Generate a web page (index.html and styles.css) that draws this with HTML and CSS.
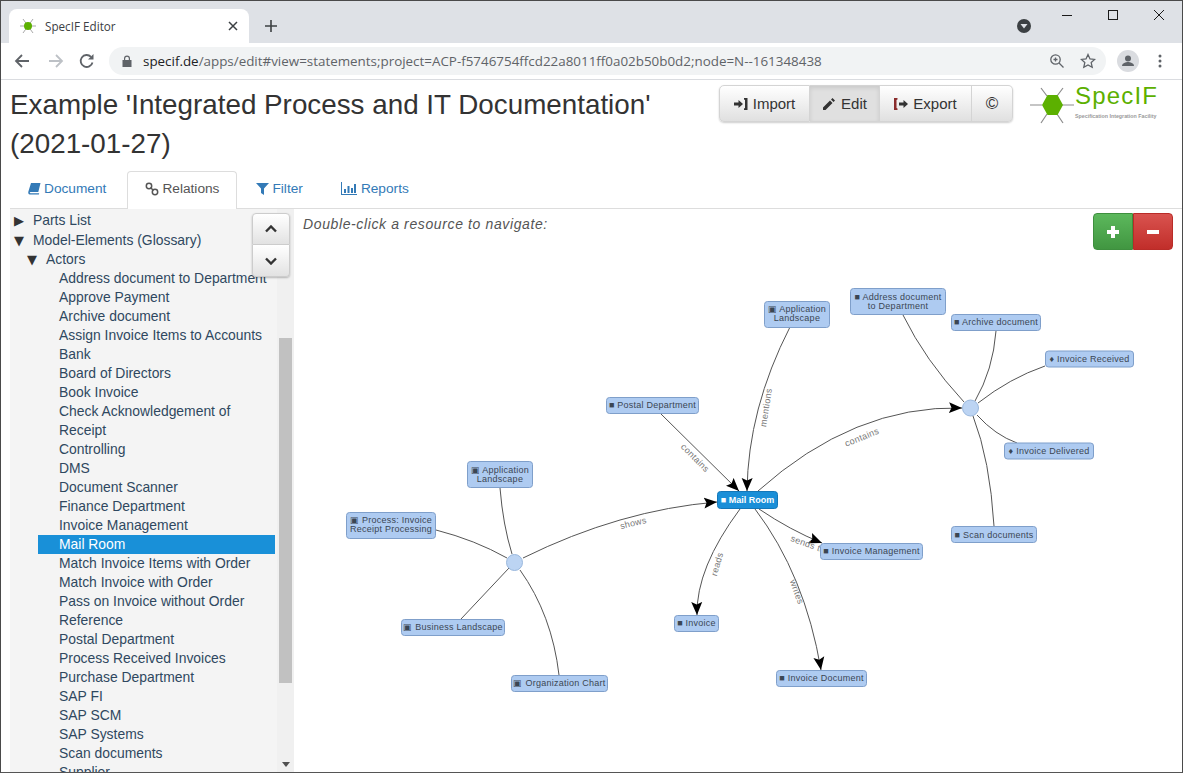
FILE: index.html
```html
<!DOCTYPE html>
<html lang="en">
<head>
  <meta charset="UTF-8" />
  <title>SpecIF Editor</title>
  <link rel="stylesheet" href="styles.css">
</head>
<body>
  <div class="window">

    <!-- Browser tab strip -->
    <div class="tabstrip">
      <div class="browser-tab">
        <svg class="favicon" width="16" height="16" viewBox="0 0 16 16">
          <path class="spoke" d="M0 8h16M3 1l10 14M13 1L3 15"/>
          <circle class="favicon-dot" cx="8" cy="8" r="4"/>
        </svg>
        <span class="browser-tab-title">SpecIF Editor</span>
        <svg class="tab-close" width="10" height="10" viewBox="0 0 10 10"><path d="M1 1l8 8M9 1L1 9"/></svg>
      </div>
      <svg class="tab-new" width="12" height="12" viewBox="0 0 12 12"><path d="M6 0v12M0 6h12"/></svg>
      <div class="tabstrip-right">
        <svg class="profile-drop" width="14" height="14" viewBox="0 0 14 14">
          <circle cx="7" cy="7" r="7" fill="#3c4043"/><path d="M3.5 5h7L7 9.5z" fill="#dee1e6"/>
        </svg>
        <div class="winctl">
          <svg width="10" height="10" viewBox="0 0 10 10"><path d="M0 5.5h10"/></svg>
          <svg width="10" height="10" viewBox="0 0 10 10"><rect x="0.5" y="0.5" width="9" height="9"/></svg>
          <svg width="10" height="10" viewBox="0 0 10 10"><path d="M0 0l10 10M10 0L0 10"/></svg>
        </div>
      </div>
    </div>

    <!-- Browser toolbar -->
    <div class="toolbar">
      <svg class="nav-icon" width="16" height="16" viewBox="0 0 16 16"><path d="M15 8H2M8 2L2 8l6 6"/></svg>
      <svg class="nav-icon nav-off" width="16" height="16" viewBox="0 0 16 16"><path d="M1 8h13M8 2l6 6-6 6"/></svg>
      <svg class="nav-icon nav-reload" width="16" height="16" viewBox="0 0 16 16"><path d="M13.5 9.5A6 6 0 1 1 12 3.8"/><path class="solid" d="M14.5 1v5.5H9z"/></svg>
      <div class="omnibox">
        <svg class="lock" width="10" height="12" viewBox="0 0 10 12"><path d="M2 5V3.5a3 3 0 0 1 6 0V5h1.500v7H.5V5zm1.200 0h3.600V3.500a1.800 1.800 0 0 0-3.600 0z"/></svg>
        <span class="url"><span class="url-host">specif.de</span>/apps/edit#view=statements;project=ACP-f5746754ffcd22a8011ff0a02b50b0d2;node=N--161348438</span>
        <svg class="omni-icon" width="14" height="14" viewBox="0 0 14 14"><circle cx="5.500" cy="5.500" r="4.700"/><path d="M9 9l4.500 4.500M3.500 5.500h4M5.500 3.500v4"/></svg>
        <svg class="omni-icon" width="16" height="16" viewBox="0 0 16 16"><path d="M8 1.500l2 4.400 4.700.5-3.500 3.200 1 4.700L8 11.900l-4.200 2.400 1-4.700L1.300 6.400 6 5.900z"/></svg>
      </div>
      <svg class="avatar" width="22" height="22" viewBox="0 0 22 22">
        <circle cx="11" cy="11" r="11" fill="#dadce0"/>
        <circle cx="11" cy="8.500" r="3" fill="#5f6368"/><path d="M5 16c0-3 4-4 6-4s6 1 6 4z" fill="#5f6368"/>
      </svg>
      <svg class="menu-dots" width="4" height="14" viewBox="0 0 4 14"><circle cx="2" cy="2" r="1.500"/><circle cx="2" cy="7" r="1.500"/><circle cx="2" cy="12" r="1.500"/></svg>
    </div>

    <!-- Page -->
    <div class="page">
      <div class="page-head">
        <h1 class="title">Example 'Integrated Process and IT Documentation' <span class="nowrap">(2021-01-27)</span></h1>
        <div class="btn-group">
          <button class="btn btn-import">
            <svg class="gl" width="14" height="14" viewBox="0 0 14 14"><path d="M0 5.500h4.500V3L9 7l-4.500 4V8.500H0z"/><path d="M10 1h3.500v12H10v-1.500l1-.5V3l-1-.5z"/></svg>Import</button>
          <button class="btn btn-edit btn-active">
            <svg class="gl" width="14" height="14" viewBox="0 0 14 14"><path d="M10.500 1l2.500 2.500-1.500 1.500L9 2.500zM8 3.500L10.500 6l-7 7H1v-2.500z"/></svg>Edit</button>
          <button class="btn btn-export">
            <svg class="gl gl-out" width="14" height="14" viewBox="0 0 14 14"><path class="door" d="M0 1h3.500v1.500l-1 .5v8l1 .5V13H0z"/><path d="M5 5.500h4.500V3L14 7l-4.500 4V8.500H5z"/></svg>Export</button>
          <button class="btn btn-copy">©</button>
        </div>
        <div class="logo">
          <svg class="logo-mark" width="44" height="38" viewBox="0 0 44 38">
            <path class="logo-spoke" d="M0 18h12M32 18h12M17 9L11 1M27 9l6-8M17 27l-6 9M27 27l6 9"/>
            <path class="logo-hex" d="M12 18l5.500-10h10L33 18l-5.500 10h-10z"/>
          </svg>
          <div class="logo-text">
            <div class="logo-name">SpecIF</div>
            <div class="logo-sub">Specification Integration Facility</div>
          </div>
        </div>
      </div>

      <ul class="tabs">
        <li class="tab"><svg class="gl" width="13" height="13" viewBox="0 0 13 13"><path d="M3 1h9.500l-2.200 9H2.500c-1 0-1 1.200 0 1.200h8.700l-.3 1.300H2C.3 12.500 0 11 .4 9.500z"/></svg>Document</li>
        <li class="tab tab-active"><svg class="gl gl-link" width="14" height="14" viewBox="0 0 14 14"><circle cx="4" cy="4" r="2.700"/><circle cx="10" cy="10" r="2.700"/><path d="M5.500 5.500l3 3"/></svg>Relations</li>
        <li class="tab"><svg class="gl" width="13" height="13" viewBox="0 0 13 13"><path d="M0 1h13L8 6.500V13l-3-2V6.500z"/></svg>Filter</li>
        <li class="tab"><svg class="gl gl-stats" width="18" height="13" viewBox="0 0 16 13"><path d="M0 0h1v12h15v1H0zM3 7h2v4H3zM6.500 4h2v7h-2zM10 6h2v5h-2zM13 2h2v9h-2z"/></svg>Reports</li>
      </ul>

      <div class="main">
        <div class="side">
          <div class="tree">
            <div class="row lvl-1"><span class="arrow">▶</span>Parts List</div>
            <div class="row lvl-1"><span class="arrow">▼</span>Model-Elements (Glossary)</div>
            <div class="row lvl-2"><span class="arrow">▼</span>Actors</div>
            <div class="row leaf">Address document to Department</div>
            <div class="row leaf">Approve Payment</div>
            <div class="row leaf">Archive document</div>
            <div class="row leaf">Assign Invoice Items to Accounts</div>
            <div class="row leaf">Bank</div>
            <div class="row leaf">Board of Directors</div>
            <div class="row leaf">Book Invoice</div>
            <div class="row leaf">Check Acknowledgement of<br>Receipt</div>
            <div class="row leaf">Controlling</div>
            <div class="row leaf">DMS</div>
            <div class="row leaf">Document Scanner</div>
            <div class="row leaf">Finance Department</div>
            <div class="row leaf">Invoice Management</div>
            <div class="row leaf row-selected">Mail Room</div>
            <div class="row leaf">Match Invoice Items with Order</div>
            <div class="row leaf">Match Invoice with Order</div>
            <div class="row leaf">Pass on Invoice without Order</div>
            <div class="row leaf">Reference</div>
            <div class="row leaf">Postal Department</div>
            <div class="row leaf">Process Received Invoices</div>
            <div class="row leaf">Purchase Department</div>
            <div class="row leaf">SAP FI</div>
            <div class="row leaf">SAP SCM</div>
            <div class="row leaf">SAP Systems</div>
            <div class="row leaf">Scan documents</div>
            <div class="row leaf">Supplier</div>
          </div>
          <div class="scrollbar">
            <div class="scroll-thumb"></div>
            <div class="scroll-down"></div>
          </div>
          <div class="updown">
            <button class="ud-btn"><svg width="12" height="8" viewBox="0 0 12 8"><path d="M1 6.500l5-5 5 5"/></svg></button>
            <button class="ud-btn"><svg width="12" height="8" viewBox="0 0 12 8"><path d="M1 1.500l5 5 5-5"/></svg></button>
          </div>
        </div>

        <div class="graph">
          <svg class="canvas" width="889" height="564" viewBox="294 209 889 564">
            <defs>
              <marker id="head" markerUnits="userSpaceOnUse" markerWidth="14" markerHeight="12" refX="13" refY="6" orient="auto">
                <path d="M0 0.500L13 6 0 11.500 2.500 6z" fill="#000"/>
              </marker>
            </defs>

            <!-- edges -->
            <g class="edges">
              <path d="M661 414L739 491" marker-end="url(#head)"/>
              <path d="M790 327Q748 409 747 491" marker-end="url(#head)"/>
              <path d="M758 491Q854 405 962 408" marker-end="url(#head)"/>
              <path d="M523 558Q620 510 717 502" marker-end="url(#head)"/>
              <path d="M740 509Q696 568 697 615" marker-end="url(#head)"/>
              <path d="M755 509Q805 575 821 670" marker-end="url(#head)"/>
              <path d="M759 509Q790 530 822 543" marker-end="url(#head)"/>
              <path d="M903 315Q925 360 964 402"/>
              <path d="M996 331Q993 370 975 401"/>
              <path d="M1045 366Q1010 378 978 403"/>
              <path d="M1017 443Q995 435 977 415"/>
              <path d="M994 526Q990 460 973 416"/>
              <path d="M500 488Q503 525 512 554"/>
              <path d="M436 530Q475 540 507 558"/>
              <path d="M461 619L509 568"/>
              <path d="M559 675Q552 615 520 570"/>
            </g>

            <!-- edge labels -->
            <g class="edge-labels">
              <text transform="translate(693 460) rotate(45)">contains</text>
              <text transform="translate(769 408) rotate(-81)">mentions</text>
              <text transform="translate(863 440) rotate(-22)">contains</text>
              <text transform="translate(634 526) rotate(-14)">shows</text>
              <text transform="translate(720 565) rotate(-74)">reads</text>
              <text transform="translate(794 593) rotate(70)">writes</text>
              <text transform="translate(807 547) rotate(20)">sends to</text>
            </g>

            <circle class="hub" cx="514.500" cy="562.500" r="8"/>
            <circle class="hub" cx="970.500" cy="408" r="8"/>

            <!-- nodes -->
            <g class="node"><rect x="606.500" y="397.500" width="92" height="16" rx="3"/><text x="652.500" y="407.500">■ Postal Department</text></g>
            <g class="node"><rect x="820.500" y="543.500" width="102" height="16" rx="3"/><text x="871.500" y="553.500">■ Invoice Management</text></g>
            <g class="node"><rect x="674.500" y="615.500" width="44" height="16" rx="3"/><text x="696.500" y="625.500">■ Invoice</text></g>
            <g class="node"><rect x="776.500" y="670.500" width="90" height="16" rx="3"/><text x="821.500" y="680.500">■ Invoice Document</text></g>
            <g class="node"><rect x="764.500" y="301.500" width="65" height="26" rx="3"/><text x="797" y="312">▣ Application</text><text x="797" y="321">Landscape</text></g>
            <g class="node"><rect x="850.500" y="288.500" width="95" height="26" rx="3"/><text x="898" y="300">■ Address document</text><text x="898" y="309">to Department</text></g>
            <g class="node"><rect x="951.500" y="314.500" width="89" height="16" rx="3"/><text x="996" y="324.500">■ Archive document</text></g>
            <g class="node"><rect x="1045.500" y="351" width="88" height="16" rx="3"/><text x="1089.500" y="362">♦ Invoice Received</text></g>
            <g class="node"><rect x="1004.500" y="443" width="89" height="16" rx="3"/><text x="1049" y="454">♦ Invoice Delivered</text></g>
            <g class="node"><rect x="951.500" y="526.500" width="85" height="16" rx="3"/><text x="994" y="537.500">■ Scan documents</text></g>
            <g class="node"><rect x="467.500" y="461.500" width="65" height="26" rx="3"/><text x="500" y="473">▣ Application</text><text x="500" y="482">Landscape</text></g>
            <g class="node"><rect x="346.500" y="512.500" width="89" height="26" rx="3"/><text x="391" y="523">▣ Process: Invoice</text><text x="391" y="532">Receipt Processing</text></g>
            <g class="node"><rect x="401.500" y="619.500" width="103" height="16" rx="3"/><text x="453" y="629.500">▣ Business Landscape</text></g>
            <g class="node"><rect x="511.500" y="675.500" width="96" height="16" rx="3"/><text x="559.500" y="685.500">▣ Organization Chart</text></g>
            <g class="node node-active"><rect x="717.500" y="491.500" width="60" height="17" rx="3"/><text x="747.500" y="503">■ Mail Room</text></g>
          </svg>

          <p class="hint">Double-click a resource to navigate:</p>
          <div class="zoom-group">
            <button class="zoom-btn zoom-in"><svg width="12" height="12" viewBox="0 0 12 12"><path d="M4 0h4v4h4v4H8v4H4V8H0V4h4z"/></svg></button>
            <button class="zoom-btn zoom-out"><svg width="12" height="12" viewBox="0 0 12 12"><path d="M0 4h12v4H0z"/></svg></button>
          </div>
        </div>
      </div>
    </div>
  </div>
</body>
</html>
```

FILE: styles.css
```css
/* Reset & base */
* { box-sizing: border-box; margin: 0; padding: 0; }
html, body { height: 100%; overflow: hidden; }
body { font-family: "Liberation Sans", Arial, sans-serif; font-size: 13.900px; color: #333; background: #fff; }

.window { height: 773px; display: flex; flex-direction: column; border: 1px solid #4a4a4a; border-bottom-color: #555; overflow: hidden; }
.nowrap { white-space: nowrap; }

/* Browser tab strip */
.tabstrip { height: 42px; flex: none; background: #dee1e6; display: flex; align-items: flex-end; padding-left: 8px; }
.browser-tab { width: 240px; height: 34px; background: #fff; border-radius: 8px 8px 0 0; display: flex; align-items: center; padding: 0 11px 0 11px; }
.favicon { margin-right: 9px; flex: none; }
.spoke { stroke: #a9a9a9; stroke-width: 1; fill: none; }
.favicon-dot { fill: #5cb000; }
.browser-tab-title { font-family: "Open Sans", sans-serif; font-size: 11.700px; color: #3c4043; flex: 1; }
.tab-close { stroke: #3c4043; stroke-width: 1.5; flex: none; }
.tab-new { stroke: #3c4043; stroke-width: 1.6; flex: none; margin: 0 0 11px 16px; }
.tabstrip-right { margin-left: auto; align-self: stretch; display: flex; }
.profile-drop { margin: 18px 31px 0 0; }
.winctl { display: flex; gap: 36px; padding: 9px 18px 0 0; align-items: flex-start; }
.winctl svg { fill: none; stroke: #1a1a1a; stroke-width: 1; }

/* Browser toolbar */
.toolbar { height: 37px; flex: none; background: #fff; border-bottom: 1px solid #dadce0; display: flex; align-items: center; padding: 0 0 1px 13px; }
.nav-icon { fill: none; stroke: #5f6368; stroke-width: 1.800; margin-right: 18px; flex: none; }
.nav-icon .solid { fill: #5f6368; stroke: none; }
.nav-off { stroke: #bdc1c6; margin-right: 15px; }
.nav-reload { margin-right: 14px; }
.omnibox { width: 997px; height: 28px; border-radius: 14px; background: #f1f3f4; display: flex; align-items: center; padding: 0 10px 0 13px; flex: none; }
.lock { fill: #5f6368; flex: none; margin-right: 11px; }
.url { font-family: "Open Sans", sans-serif; font-size: 13.400px; color: #5f6368; flex: 1; white-space: nowrap; }
.url-host { color: #202124; }
.omni-icon { fill: none; stroke: #5f6368; stroke-width: 1.300; flex: none; margin-left: 16px; }
.avatar { margin-left: 11px; flex: none; }
.menu-dots { fill: #5f6368; margin-left: 19px; flex: none; }

/* Page head */
.page { flex: 1; min-height: 0; display: flex; flex-direction: column; padding-left: 9px; }
.page-head { height: 91px; flex: none; display: flex; align-items: flex-start; }
.title { width: 709px; flex: none; font-size: 27.800px; font-weight: 400; line-height: 39px; color: #333; padding-top: 5px; }
.btn-group { display: flex; margin-top: 5px; border-radius: 5px; box-shadow: 0 1px 2px rgba(0,0,0,0.2); flex: none; }
.btn { height: 37px; font: 15px "Liberation Sans", Arial, sans-serif; color: #333; background: linear-gradient(#fff, #e0e0e0); border: 1px solid #d4d4d4; border-left: none; display: flex; align-items: center; justify-content: center; gap: 5px; }
.btn-import { width: 91px; border-left: 1px solid #d4d4d4; border-radius: 5px 0 0 5px; }
.btn-edit { width: 70px; }
.btn-export { width: 92px; }
.btn-copy { width: 41px; border-radius: 0 5px 5px 0; font-size: 17px; }
.btn-active { background: #e0e0e0; box-shadow: inset 0 2px 4px rgba(0,0,0,0.1); }
.gl { fill: currentColor; flex: none; }
.door { fill: #8a2c2c; }
.logo { display: flex; margin: 4px 0 0 17px; flex: none; }
.logo-mark { margin-top: 3px; flex: none; }
.logo-spoke { stroke: #8c8c8c; stroke-width: 1.200; fill: none; }
.logo-hex { fill: #5cb000; }
.logo-text { margin: 0 0 0 1px; }
.logo-name { font-size: 24px; line-height: 24px; color: #5cb000; letter-spacing: 1.200px; }
.logo-sub { font-size: 5.300px; font-weight: 700; color: #999; margin-top: 5px; white-space: nowrap; }

/* Tabs */
.tabs { list-style: none; display: flex; height: 38px; flex: none; border-bottom: 1px solid #ddd; }
.tab { height: 38px; padding: 0 17px 4px; margin-right: 1px; font-size: 13.700px; color: #337ab7; display: flex; align-items: center; gap: 3px; border: 1px solid transparent; border-bottom: none; }
.tab-active { margin-left: 2px; background: #fff; color: #555; border-color: #ddd; border-radius: 4px 4px 0 0; }
.gl-link { fill: none; stroke: currentColor; stroke-width: 1.500; }

/* Tree */
.main { flex: 1; min-height: 0; display: flex; }
.side { width: 284px; flex: none; position: relative; display: flex; background: #f4f4f4; }
.tree { flex: 1; min-width: 0; overflow: hidden; padding-top: 1px; color: #2f4860; }
.row { line-height: 19px; white-space: nowrap; }
.row:first-child { line-height: 20px; padding-bottom: 1px; }
.lvl-1 { padding-left: 4px; }
.lvl-2 { padding-left: 17px; }
.leaf { padding-left: 49px; }
.arrow { display: inline-block; width: 19px; line-height: 1; font-family: "DejaVu Sans", sans-serif; font-size: 13px; color: #333; }
.row-selected { background: #1990d8; color: #fff; margin: 0 2px 0 28px; padding-left: 21px; line-height: 18px; padding-bottom: 1px; }
.scrollbar { width: 17px; flex: none; background: #f0f0f0; display: flex; flex-direction: column; align-items: center; }
.scroll-thumb { width: 13px; height: 345px; margin-top: 129px; background: #c1c1c1; }
.scroll-down { margin-top: auto; margin-bottom: 5px; border: 4px solid transparent; border-top: 5px solid #505050; border-bottom: none; }
.updown { position: absolute; left: 242px; top: 4px; width: 38px; border-radius: 4px; box-shadow: 0 1px 2px rgba(0,0,0,0.25); }
.ud-btn { display: flex; width: 38px; height: 32px; align-items: center; justify-content: center; background: linear-gradient(#fff, #e2e2e2); border: 1px solid #ccc; }
.ud-btn:first-child { border-radius: 4px 4px 0 0; }
.ud-btn:last-child { border-radius: 0 0 4px 4px; border-top: none; }
.ud-btn svg { fill: none; stroke: #333; stroke-width: 2.400; }

/* Graph */
.graph { flex: 1; min-width: 0; position: relative; }
.canvas { position: absolute; left: 0; top: 0; }
.hint { padding: 7px 0 0 9px; font-size: 14px; font-style: italic; color: #555; letter-spacing: 0.620px; }
.zoom-group { position: absolute; top: 4px; right: 9px; display: flex; }
.zoom-btn { width: 40px; height: 37px; border: 1px solid; display: flex; align-items: center; justify-content: center; }
.zoom-btn svg { fill: #fff; }
.zoom-in { background: linear-gradient(#5cb85c, #419641); border-color: #3e8f3e; border-radius: 4px 0 0 4px; }
.zoom-out { background: linear-gradient(#d9534f, #c12e2a); border-color: #b92c28; border-radius: 0 4px 4px 0; }

.edges path { fill: none; stroke: #555; stroke-width: 1; }
.edge-labels text { font-size: 9px; fill: #777; text-anchor: middle; letter-spacing: 0.300px; }
.hub { fill: #bcd4f3; stroke: #9ab8dd; stroke-width: 1; }
.node rect { fill: #aecbf1; stroke: #7f9fca; stroke-width: 1; }
.node text { font-size: 9px; fill: #3b4653; text-anchor: middle; letter-spacing: 0.250px; }
.node-active rect { fill: #1a8fd8; stroke: #1477b8; }
.node-active text { fill: #fff; font-weight: 700; letter-spacing: 0; }
```
